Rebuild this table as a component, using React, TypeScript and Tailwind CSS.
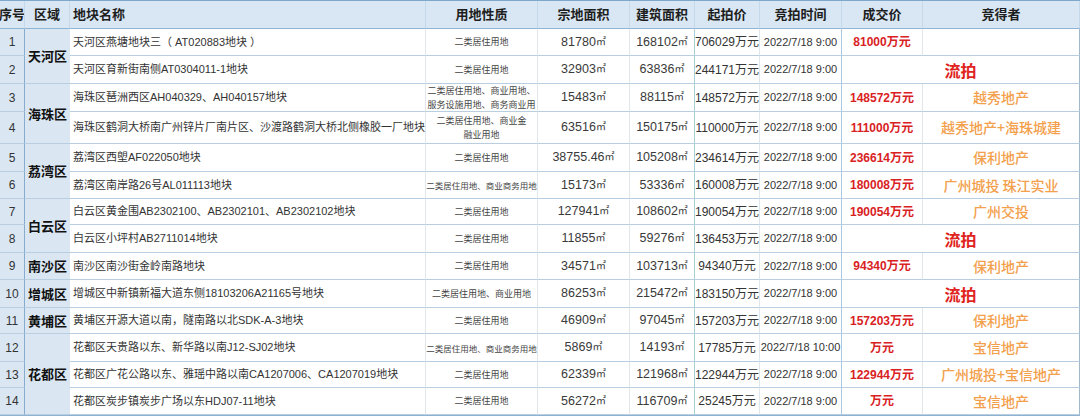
import React from "react";

type Row = {
  n: number;
  name: string;
  use: string[];
  a: string;
  b: string;
  s: string;
  t: string;
  flow?: boolean;
  p?: string;
  w?: string;
};

const T = "2022/7/18 9:00";

const rows: Row[] = [
  { n: 1, name: "天河区燕塘地块三（ AT020883地块 ）", use: ["二类居住用地"], a: "81780", b: "168102", s: "706029万元", t: T, p: "81000万元", w: "" },
  { n: 2, name: "天河区育新街南侧AT0304011-1地块", use: ["二类居住用地"], a: "32903", b: "63836", s: "244171万元", t: T, flow: true },
  { n: 3, name: "海珠区琶洲西区AH040329、AH040157地块", use: ["二类居住用地、商业用地、", "服务设施用地、商务商业用"], a: "15483", b: "88115", s: "148572万元", t: T, p: "148572万元", w: "越秀地产" },
  { n: 4, name: "海珠区鹤洞大桥南广州锌片厂南片区、沙渡路鹤洞大桥北侧橡胶一厂地块", use: ["二类居住用地、商业金", "融业用地"], a: "63516", b: "150175", s: "110000万元", t: T, p: "111000万元", w: "越秀地产+海珠城建" },
  { n: 5, name: "荔湾区西塱AF022050地块", use: ["二类居住用地"], a: "38755.46", b: "105208", s: "234614万元", t: T, p: "236614万元", w: "保利地产" },
  { n: 6, name: "荔湾区南岸路26号AL011113地块", use: ["二类居住用地、商业商务用地"], a: "15173", b: "53336", s: "160008万元", t: T, p: "180008万元", w: "广州城投 珠江实业" },
  { n: 7, name: "白云区黄金围AB2302100、AB2302101、AB2302102地块", use: ["二类居住用地"], a: "127941", b: "108602", s: "190054万元", t: T, p: "190054万元", w: "广州交投" },
  { n: 8, name: "白云区小坪村AB2711014地块", use: ["二类居住用地"], a: "11855", b: "59276", s: "136453万元", t: T, flow: true },
  { n: 9, name: "南沙区南沙街金岭南路地块", use: ["二类居住用地"], a: "34571", b: "103713", s: "94340万元", t: T, p: "94340万元", w: "保利地产" },
  { n: 10, name: "增城区中新镇新福大道东侧18103206A21165号地块", use: ["二类居住用地、商业用地"], a: "86253", b: "215472", s: "183150万元", t: T, flow: true },
  { n: 11, name: "黄埔区开源大道以南，隧南路以北SDK-A-3地块", use: ["二类居住用地"], a: "46909", b: "97045", s: "157203万元", t: T, p: "157203万元", w: "保利地产" },
  { n: 12, name: "花都区天贵路以东、新华路以南J12-SJ02地块", use: ["二类居住用地、商业商务用地"], a: "5869", b: "14193", s: "17785万元", t: "2022/7/18 10:00", p: "万元", w: "宝信地产" },
  { n: 13, name: "花都区广花公路以东、雅瑶中路以南CA1207006、CA1207019地块", use: ["二类居住用地"], a: "62339", b: "121968", s: "122944万元", t: T, p: "122944万元", w: "广州城投+宝信地产" },
  { n: 14, name: "花都区炭步镇炭步广场以东HDJ07-11地块", use: ["二类居住用地"], a: "56272", b: "116709", s: "25245万元", t: T, p: "万元", w: "宝信地产" },
];

const regions: Record<number, { name: string; span: string }> = {
  1: { name: "天河区", span: "row-span-2" },
  3: { name: "海珠区", span: "row-span-2" },
  5: { name: "荔湾区", span: "row-span-2" },
  7: { name: "白云区", span: "row-span-2" },
  9: { name: "南沙区", span: "" },
  10: { name: "增城区", span: "" },
  11: { name: "黄埔区", span: "" },
  12: { name: "花都区", span: "row-span-3" },
};

const cell =
  "flex items-center justify-center overflow-hidden whitespace-nowrap border-b border-b-[#b9cfe1]";

function H({ children, className = "" }: { children: React.ReactNode; className?: string }) {
  return (
    <div
      className={`flex items-center justify-center overflow-hidden whitespace-nowrap border-b border-b-[#8fb4d4] border-r border-r-[#c6d9ea] bg-[#d8e7f3] font-bold text-[13px] text-[#1e1e1e] ${className}`}
    >
      {children}
    </div>
  );
}

function Area({ v }: { v: string }) {
  return (
    <span className="text-[12.5px] text-[#3a3a3a]">
      {v}
      <span className="text-[10px] relative -top-[1px]">㎡</span>
    </span>
  );
}

export default function App() {
  return (
    <div className="w-[1080px] h-[416px] bg-white overflow-hidden font-['Liberation_Sans','Noto_Sans_CJK_SC',sans-serif]">
      <div className="grid grid-cols-[25px_45px_356px_112px_92px_65px_65px_82px_81px_157px] grid-rows-[28px_27px_28px_28px_32px_28px_27px_26px_28px_27px_28px_26px_28px_26px_27px] border-t border-t-[#7ea8cb] border-b-2 border-b-[#8db2d2]">
        <H className="text-[12px] border-r-[#86acd0]">序号</H>
        <H className="text-[12px]">区域</H>
        <H className="!justify-start pl-[3px]">地块名称</H>
        <H>用地性质</H>
        <H>宗地面积</H>
        <H>建筑面积</H>
        <H>起拍价</H>
        <H>竞拍时间</H>
        <H>成交价</H>
        <H className="border-r-[#9fb8cc]">竞得者</H>

        {rows.map((r) => (
          <React.Fragment key={r.n}>
            <div className={`${cell} bg-[#dae7f3] border-r border-r-[#86acd0] text-[12px] text-[#333]`}>{r.n}</div>
            {regions[r.n] && (
              <div
                className={`${cell} ${regions[r.n].span} bg-[#dae7f3] font-bold text-[13px] text-[#111] font-['Noto_Sans_CJK_SC',sans-serif]`}
              >
                {regions[r.n].name}
              </div>
            )}
            <div className={`${cell} !justify-start pl-[3px] border-r border-r-[#dfe6ec] text-[11px] text-[#333]`}>{r.name}</div>
            <div
              className={`${cell} flex-col border-r border-r-[#dfe6ec] ${
                r.use[0].length > 12 ? "text-[8.5px]" : "text-[9px]"
              } leading-[14px] text-[#444] font-['Noto_Sans_CJK_SC',sans-serif]`}
            >
              {r.use.map((u, i) => (
                <div key={i}>{u}</div>
              ))}
            </div>
            <div className={`${cell} border-r border-r-[#dfe6ec]`}>
              <Area v={r.a} />
            </div>
            <div className={`${cell} border-r border-r-[#a6d0d6]`}>
              <Area v={r.b} />
            </div>
            <div className={`${cell} border-r border-r-[#dfe6ec] text-[12px] text-[#333]`}>{r.s}</div>
            <div className={`${cell} border-r border-r-[#a9c7de] text-[11px] text-[#333]`}>{r.t}</div>
            {r.flow ? (
              <div className={`${cell} col-span-2 border-r border-r-[#9fb8cc] text-[16px] font-bold text-[#e0231c] font-['Noto_Sans_CJK_SC',sans-serif]`}>
                流拍
              </div>
            ) : (
              <>
                <div className={`${cell} border-r border-r-[#dfe6ec] text-[12px] font-bold text-[#d9221f]`}>{r.p}</div>
                <div className={`${cell} border-r border-r-[#9fb8cc] text-[14px] font-medium text-[#f3a04c] font-['Noto_Sans_CJK_SC',sans-serif]`}>
                  {r.w}
                </div>
              </>
            )}
          </React.Fragment>
        ))}
      </div>
    </div>
  );
}
